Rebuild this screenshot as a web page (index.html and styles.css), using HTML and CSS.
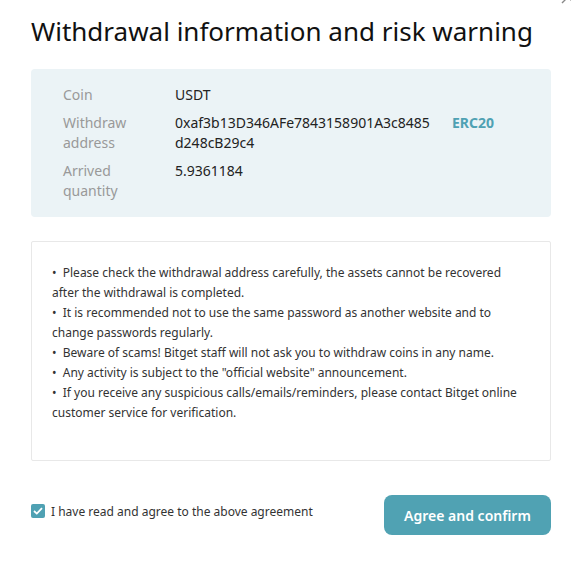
FILE: index.html
```html
<!DOCTYPE html>
<html lang="en">
<head>
    <meta charset="UTF-8">
    <meta name="viewport" content="width=device-width, initial-scale=1.0">
    <title>Withdrawal information and risk warning</title>
    <link rel="stylesheet" href="styles.css">
</head>
<body>
    <div class="modal">
        <svg class="close" width="14" height="14" viewBox="0 0 14 14">
            <path d="M1 1L13 13M13 1L1 13" stroke="#888" stroke-width="1.4" fill="none"/>
        </svg>
        <h1>Withdrawal information and risk warning</h1>

        <div class="info">
            <div class="row">
                <div class="label">Coin</div>
                <div class="value">USDT</div>
            </div>
            <div class="row">
                <div class="label">Withdraw address</div>
                <div class="value addr">0xaf3b13D346AFe7843158901A3c8485 d248cB29c4</div>
                <div class="tag">ERC20</div>
            </div>
            <div class="row">
                <div class="label">Arrived quantity</div>
                <div class="value">5.9361184</div>
            </div>
        </div>

        <div class="warning">
            <p>• &nbsp;Please check the withdrawal address carefully, the assets cannot be recovered after the withdrawal is completed.</p>
            <p>• &nbsp;It is recommended not to use the same password as another website and to change passwords regularly.</p>
            <p>• &nbsp;Beware of scams! Bitget staff will not ask you to withdraw coins in any name.</p>
            <p>• &nbsp;Any activity is subject to the "official website" announcement.</p>
            <p>• &nbsp;If you receive any suspicious calls/emails/reminders, please contact Bitget online customer service for verification.</p>
        </div>

        <div class="footer">
            <label class="agree">
                <span class="check">
                    <svg width="10" height="8" viewBox="0 0 10 8">
                        <path d="M1 4L3.8 6.6L9 1.2" stroke="#fff" stroke-width="1.8" fill="none"/>
                    </svg>
                </span>
                I have read and agree to the above agreement
            </label>
            <button>Agree and confirm</button>
        </div>
    </div>
</body>
</html>
```

FILE: styles.css
```css
body {
    margin: 0;
    background: #fff;
    font-family: "Noto Sans", "Open Sans", sans-serif;
    color: #333;
}
.modal {
    position: relative;
    padding: 0 20px 0 31px;
}
.close {
    position: absolute;
    top: -10px;
    right: -4px;
}
h1 {
    margin: 0;
    padding-top: 12px;
    height: 57px;
    font-size: 26px;
    font-weight: 400;
    color: #111;
    line-height: 38px;
}
.info {
    background: #ebf3f6;
    border-radius: 4px;
    padding: 16px 32px 16px 32px;
    display: flex;
    flex-direction: column;
    gap: 8px;
}
.row {
    display: flex;
    font-size: 14px;
    line-height: 20px;
}
.label {
    width: 112px;
    color: #999;
    padding-right: 20px;
    box-sizing: border-box;
}
.value {
    color: #222;
}
.addr {
    width: 256px;
    word-break: break-all;
}
.tag {
    margin-left: 21px;
    color: #4fa1b3;
    font-weight: 700;
}
.warning {
    margin-top: 24px;
    border: 1px solid #e8e8e8;
    border-radius: 2px;
    height: 220px;
    padding: 21px 20px 0 20px;
    box-sizing: border-box;
    font-size: 12px;
    line-height: 20px;
    color: #333;
}
.warning p {
    margin: 0;
}
.footer {
    margin-top: 34px;
    display: flex;
    justify-content: space-between;
    align-items: center;
}
.agree {
    display: flex;
    align-items: center;
    gap: 6px;
    font-size: 12px;
    color: #333;
    margin-top: -8px;
}
.check {
    width: 14px;
    height: 14px;
    border-radius: 2px;
    background: #4fa1b3;
    display: flex;
    align-items: center;
    justify-content: center;
}
button {
    width: 167px;
    height: 40px;
    border: none;
    border-radius: 8px;
    background: #50a2b3;
    color: #fff;
    font-family: "Noto Sans", sans-serif;
    font-size: 14px;
    font-weight: 600;
    cursor: pointer;
}
```
